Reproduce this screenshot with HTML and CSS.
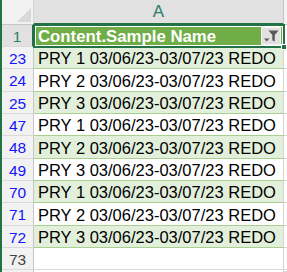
FILE: index.html
```html
<!DOCTYPE html>
<html lang="en">
<head>
    <meta charset="UTF-8">
    <title>Sheet - Content.Sample Name</title>
    <link rel="stylesheet" href="styles.css">
</head>
<body>

    <div class="window">
        <div class="sheet">

            <div class="row head-row">
                <div class="corner"><span class="tri"></span></div>
                <div class="col-head active">A</div>
                <div class="col-b head"></div>
            </div>

            <div class="row h22">
                <div class="rh active">1</div>
                <div class="cell title">
                    Content.Sample Name
                    <span class="filter">
                        <svg width="18" height="16" viewBox="0 0 18 16">
                            <polygon points="2,10.5 7.5,10.5 4.75,13.5" fill="#595959"/>
                            <polygon points="6.5,2.5 16.5,2.5 12.8,7 12.8,13.5 10.3,12.2 10.3,7" fill="#595959"/>
                        </svg>
                    </span>
                    <span class="sel"><span class="handle"></span></span>
                </div>
                <div class="col-b"></div>
            </div>

            <div class="row h22">
                <div class="rh blue">23</div>
                <div class="cell band">PRY 1 03/06/23-03/07/23 REDO</div>
                <div class="col-b"></div>
            </div>
            <div class="row h23">
                <div class="rh blue">24</div>
                <div class="cell">PRY 2 03/06/23-03/07/23 REDO</div>
                <div class="col-b"></div>
            </div>
            <div class="row h22">
                <div class="rh blue">25</div>
                <div class="cell band">PRY 3 03/06/23-03/07/23 REDO</div>
                <div class="col-b"></div>
            </div>
            <div class="row h22">
                <div class="rh blue">47</div>
                <div class="cell">PRY 1 03/06/23-03/07/23 REDO</div>
                <div class="col-b"></div>
            </div>
            <div class="row h23">
                <div class="rh blue">48</div>
                <div class="cell band">PRY 2 03/06/23-03/07/23 REDO</div>
                <div class="col-b"></div>
            </div>
            <div class="row h22">
                <div class="rh blue">49</div>
                <div class="cell">PRY 3 03/06/23-03/07/23 REDO</div>
                <div class="col-b"></div>
            </div>
            <div class="row h22">
                <div class="rh blue">70</div>
                <div class="cell band">PRY 1 03/06/23-03/07/23 REDO</div>
                <div class="col-b"></div>
            </div>
            <div class="row h23">
                <div class="rh blue">71</div>
                <div class="cell">PRY 2 03/06/23-03/07/23 REDO</div>
                <div class="col-b"></div>
            </div>
            <div class="row h22">
                <div class="rh blue">72</div>
                <div class="cell band">PRY 3 03/06/23-03/07/23 REDO</div>
                <div class="col-b"></div>
            </div>
            <div class="row h22">
                <div class="rh">73</div>
                <div class="cell empty"></div>
                <div class="col-b"></div>
            </div>
            <div class="row h2">
                <div class="rh"></div>
                <div class="cell empty"></div>
                <div class="col-b"></div>
            </div>

        </div>
    </div>

</body>
</html>
```

FILE: styles.css
```css
* {
    margin: 0;
    padding: 0;
    box-sizing: border-box;
}

body {
    background: #fff;
    font-family: 'Liberation Sans', Arial, sans-serif;
    width: 287px;
    height: 272px;
    overflow: hidden;
}

.window {
    display: flex;
    height: 272px;
    border-left: 2px solid #217346;
}

.sheet {
    flex: 1;
    display: flex;
    flex-direction: column;
    overflow: hidden;
}

.row {
    display: flex;
    flex-shrink: 0;
}

.h22 { height: 22px; }
.h23 { height: 23px; }
.h2 { height: 2px; }

.head-row {
    height: 25px;
}

.corner {
    position: relative;
    width: 32px;
    background: #f2f2f2;
    border-right: 1px solid #d4d4d4;
    border-bottom: 1px solid #c6c6c6;
}

.tri {
    position: absolute;
    right: 2px;
    bottom: 2px;
    width: 0;
    height: 0;
    border-left: 14px solid transparent;
    border-bottom: 14px solid #d8d8d8;
}

.col-head {
    width: 250px;
    background: #e1e1e1;
    border-right: 1px solid #c6c6c6;
    border-bottom: 2px solid #217346;
    display: flex;
    align-items: center;
    justify-content: center;
    font-size: 17px;
    color: #2a7d6c;
    padding-top: 1px;
}

.col-b {
    flex: 1;
    background: #fff;
    border-bottom: 1px solid #d4d4d4;
}

.col-b.head {
    background: #f2f2f2;
    border-bottom: 1px solid #c6c6c6;
}

.rh {
    width: 32px;
    background: #f2f2f2;
    border-right: 1px solid #c6c6c6;
    border-bottom: 1px solid #d9d9d9;
    display: flex;
    align-items: center;
    justify-content: center;
    font-size: 15.5px;
    color: #444;
    padding-top: 2px;
}

.rh.active {
    background: #e1e1e1;
    color: #2a7d6c;
    border-right: 2px solid #217346;
}

.rh.blue {
    color: #1414ff;
}

.cell {
    width: 250px;
    display: flex;
    align-items: center;
    padding: 2px 0 0 4px;
    font-size: 16.5px;
    color: #000;
    white-space: nowrap;
    background: #fff;
    border-right: 1px solid #d4d4d4;
    border-bottom: 1px solid #a9d08e;
}

.cell.band {
    background: #e2efda;
}

.cell.empty {
    border-bottom-color: #d9d9d9;
}

.cell.title {
    position: relative;
    background: #70ad47;
    color: #fff;
    font-weight: bold;
    font-size: 16.8px;
    border-bottom-color: #a9d08e;
}

.filter {
    position: absolute;
    right: 2px;
    top: 2px;
    width: 20px;
    height: 18px;
    background: #e1e1e1;
    border: 1px solid #f2f2f2;
    display: flex;
    align-items: center;
    justify-content: center;
}

.sel {
    position: absolute;
    top: -1px;
    left: -1px;
    right: -2px;
    bottom: -2px;
    border: 2px solid #217346;
    box-shadow: inset 0 0 0 1px #fff;
}

.handle {
    position: absolute;
    right: -4px;
    bottom: -4px;
    width: 6px;
    height: 6px;
    background: #217346;
    border: 1px solid #fff;
}
```
